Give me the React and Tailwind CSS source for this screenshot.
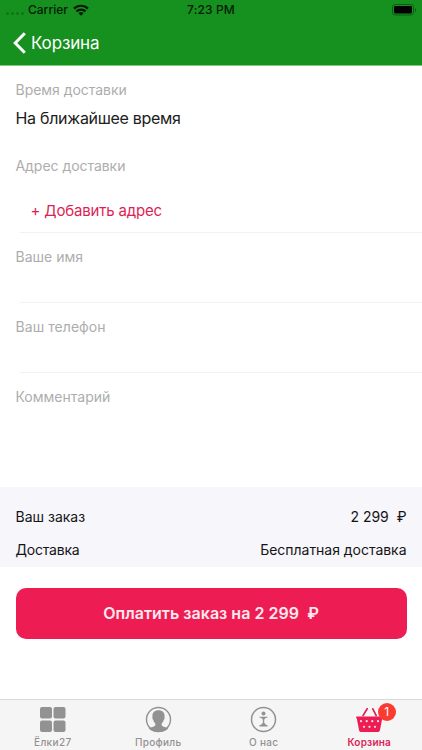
import React from 'react';

function StatusBar() {
  return (
    <div className="grid h-5 grid-cols-3 items-center text-[12px] font-medium leading-5 text-[#031c05]">
      <div className="flex items-center pl-[6px]">
        <div className="flex w-[22px] gap-[2px] pt-[7px]">
          {[0, 1, 2, 3].map((i) => (
            <span key={i} className="h-[3px] w-[3px] rounded-full bg-[#0e7518]" />
          ))}
        </div>
        <span>Carrier</span>
        <svg className="ml-[5px]" width="16" height="12" viewBox="0 0 16 12" fill="none" stroke="#031c05" strokeWidth="2.2">
          <path d="M1 4.6a10 10 0 0 1 14 0" />
          <path d="M3.5 7.4a6.4 6.4 0 0 1 9 0" />
          <path d="M8 11.8 5.5 9.3a3.6 3.6 0 0 1 5 0z" fill="#031c05" stroke="none" />
        </svg>
      </div>
      <span className="text-center tracking-[0.15px]">7:23 PM</span>
      <div className="flex justify-end pr-[5px]">
        <svg width="25" height="12" viewBox="0 0 25 12">
          <rect x="0.5" y="0.5" width="21" height="10.5" rx="2.8" fill="none" stroke="#0b5d12" />
          <rect x="2" y="2" width="18" height="7.5" rx="1.4" fill="#000" />
          <path d="M23 4v4c1.6-.6 1.6-3.4 0-4z" fill="#0b5d12" />
        </svg>
      </div>
    </div>
  );
}

function Label({ children, className }) {
  return <div className={`text-[14px] leading-5 text-[#adadad] ${className}`}>{children}</div>;
}

function Tab({ label, active, labelClass, children }) {
  return (
    <div className={`flex flex-1 flex-col items-center pt-[6px] ${active ? 'text-[#dc1f55]' : 'text-[#929292]'}`}>
      <div className="relative h-[27px] w-[27px]">{children}</div>
      <span className={`mt-[2px] whitespace-nowrap text-[10px] font-medium leading-[14px] ${labelClass}`}>{label}</span>
    </div>
  );
}

export default function App() {
  return (
    <div className="flex h-[750px] w-[422px] flex-col overflow-hidden bg-white font-['Inter','Noto_Sans',sans-serif]">
      <header className="h-[66px] border-b border-[#86c889] bg-[#16901f]">
        <StatusBar />
        <div className="flex h-[46px] items-center pl-[13px] text-[17px] text-white">
          <svg width="13" height="22" viewBox="0 0 13 22" fill="none" stroke="#fff" strokeWidth="3">
            <path d="M11.8 1.2 2.2 11l9.6 9.8" />
          </svg>
          <span className="ml-[5px] leading-6 tracking-[-0.15px]">Корзина</span>
        </div>
      </header>

      <main className="flex-1">
        <section className="h-[90px] pl-[15.5px] pt-[14px]">
          <Label className="tracking-[-0.03px]">Время доставки</Label>
          <div className="mt-[6px] text-[16px] leading-6 tracking-[-0.3px] text-[#202020]">На ближайшее время</div>
        </section>
        <section className="h-[76px] pl-[15.5px]">
          <Label className="tracking-[-0.04px]">Адрес доставки</Label>
          <div className="pl-[15px] pt-[23px] text-[15px] leading-6 tracking-[-0.17px] text-[#dc1f55]">+ Добавить адрес</div>
        </section>
        <section className="ml-5 h-[70px] border-t border-[#f2f2f2] pt-[14px]">
          <Label className="-ml-[4.5px]">Ваше имя</Label>
        </section>
        <section className="ml-5 h-[70px] border-t border-[#f2f2f2] pt-[14px]">
          <Label className="-ml-[4.5px] tracking-[0.06px]">Ваш телефон</Label>
        </section>
        <section className="ml-5 h-[115px] border-t border-[#f2f2f2] pt-[14px]">
          <Label className="-ml-[4.5px]">Комментарий</Label>
        </section>
        <section className="h-20 bg-[#f7f6fb] px-[15.5px] pt-[13px] text-[14px] leading-[33px] text-[#151515]">
          <div className="flex justify-between">
            <span>Ваш заказ</span>
            <span className="whitespace-pre">2 299  ₽</span>
          </div>
          <div className="flex justify-between">
            <span className="tracking-[-0.2px]">Доставка</span>
            <span className="tracking-[-0.03px]">Бесплатная доставка</span>
          </div>
        </section>
        <button className="mx-[15.5px] mt-[21px] flex h-[51px] w-[391px] items-center justify-center whitespace-pre rounded-[10px] bg-[#ed1d54] pb-[2px] text-[16px] font-semibold tracking-[0.03px] text-[#ffe9ef]">
          Оплатить заказ на 2 299  ₽
        </button>
      </main>

      <nav className="flex h-[51px] border-t border-[#d9d8da] bg-[#f6f5f6]">
        <Tab label="Ёлки27" labelClass="tracking-[0.35px]">
          <svg width="27" height="27" viewBox="0 0 27 27" fill="currentColor">
            <rect x="1" y="1" width="12" height="11.5" rx="2" />
            <rect x="14.5" y="1" width="12" height="11.5" rx="2" />
            <rect x="1" y="14.5" width="12" height="11.5" rx="2" />
            <rect x="14.5" y="14.5" width="12" height="11.5" rx="2" />
          </svg>
        </Tab>
        <Tab label="Профиль" labelClass="tracking-[0.3px]">
          <svg width="27" height="27" viewBox="0 0 27 27" fill="currentColor">
            <circle cx="13.5" cy="13.5" r="12" fill="none" stroke="currentColor" strokeWidth="1.4" />
            <path d="M13.5 4.2c-4 0-6.2 2.3-6.1 5.7 0 .9.2 1.4 0 1.9-.2.8.4 1.8.9 2.3.4 1.7 1.1 2.7 2 3.5v2c-.8 1.3-4.2 1.5-6.6 3A12 12 0 0 0 13.5 26a12 12 0 0 0 9.8-3.4c-2.4-1.5-5.8-1.7-6.6-3v-2c.9-.8 1.6-1.8 2-3.5.5-.5 1.1-1.5.9-2.3-.2-.5 0-1 0-1.9.1-3.4-2.1-5.7-6.1-5.7z" />
          </svg>
        </Tab>
        <Tab label="О нас" labelClass="tracking-[0.3px]">
          <svg width="27" height="27" viewBox="0 0 27 27" fill="currentColor">
            <circle cx="13.5" cy="13.5" r="12" fill="none" stroke="currentColor" strokeWidth="1.5" />
            <circle cx="13.5" cy="7.5" r="2" />
            <path d="M9.5 10.7h8v1.1c-1.4 0-2.5.4-2.7 1.5h-2.6c-.2-1.1-1.3-1.5-2.7-1.5zM12.9 13h1.3v5h-1.3zM12 17.3h3c.2 1.2 1 1.7 2.5 1.8v1.4h-8v-1.4c1.5-.1 2.3-.6 2.5-1.8z" />
          </svg>
        </Tab>
        <Tab label="Корзина" active labelClass="font-semibold tracking-[0.2px]">
          <svg width="27" height="27" viewBox="0 0 27 27">
            <path d="M7 9.6 11.2 2.8M20.2 9.6 16.8 2.8" stroke="#dc1f55" strokeWidth="1.7" strokeLinecap="round" />
            <path d="M.8 10.4h25.4c1 0 1 1.8 0 2.1l-2.2 11.5c-.2 1.3-.8 1.9-1.9 1.9H4.9c-1.1 0-1.7-.6-1.9-1.9L.8 12.5c-1-.3-1-2.1 0-2.1z" fill="#ed1d54" />
            <g fill="#fbe3ea">
              <circle cx="5" cy="15.2" r="1.1" />
              <circle cx="10.7" cy="15.2" r="1.1" />
              <circle cx="16.3" cy="15.2" r="1.1" />
              <circle cx="22" cy="15.2" r="1.1" />
              <circle cx="8" cy="20.8" r="1.1" />
              <circle cx="13.5" cy="20.8" r="1.1" />
              <circle cx="19" cy="20.8" r="1.1" />
            </g>
          </svg>
          <span className="absolute left-[22px] top-[-3px] flex h-[18px] w-[18px] items-center justify-center rounded-full bg-[#fa3b31] text-[12px] leading-none text-white">
            1
          </span>
        </Tab>
      </nav>
    </div>
  );
}
